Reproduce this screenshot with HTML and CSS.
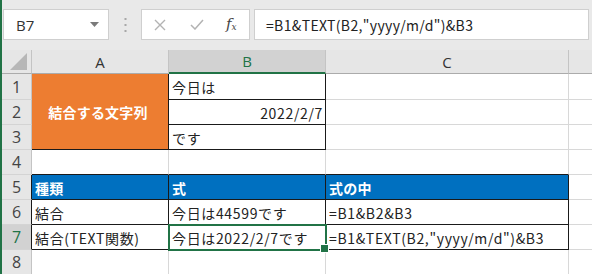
FILE: index.html
```html
<!DOCTYPE html>
<html lang="ja">
<head>
<meta charset="utf-8">
<link rel="stylesheet" href="styles.css">
</head>
<body>
<div class="app">
  <div class="toolbar">
    <div class="namebox">
      <span class="ref">B7</span>
      <svg class="caret" width="9" height="5" viewBox="0 0 9 5"><path d="M0 0h9L4.5 5z" fill="#7a7a7a"/></svg>
    </div>
    <div class="grip">
      <svg width="3" height="14" viewBox="0 0 3 14"><rect x="0.5" y="0" width="2" height="2" fill="#a8a8a8"/><rect x="0.5" y="6" width="2" height="2" fill="#a8a8a8"/><rect x="0.5" y="12" width="2" height="2" fill="#a8a8a8"/></svg>
    </div>
    <div class="fxbox">
      <svg class="ico-x" width="12" height="12" viewBox="0 0 12 12"><path d="M1 1L11 11M11 1L1 11" stroke="#b3b3b3" stroke-width="1.4" fill="none"/></svg>
      <svg class="ico-ok" width="14" height="11" viewBox="0 0 14 11"><path d="M1 6L5 10L13 1" stroke="#b3b3b3" stroke-width="1.5" fill="none"/></svg>
      <span class="fx"><i>f</i><sub>x</sub></span>
    </div>
    <div class="formula">=B1&amp;TEXT(B2,"yyyy/m/d")&amp;B3</div>
  </div>

  <div class="sheet">
    <div class="corner"><svg width="17" height="17" viewBox="0 0 17 17"><path d="M17 0V17H0z" fill="#b7b7b7"/></svg></div>
    <div class="ch">A</div>
    <div class="ch ch-sel">B</div>
    <div class="ch">C</div>
    <div class="ch ch-last"></div>

    <div class="rh">1</div>
    <div class="c merged bb br">結合する文字列</div>
    <div class="c bb br">今日は</div>
    <div class="c"></div>
    <div class="c last"></div>

    <div class="rh">2</div>
    <div class="c bb br right">2022/2/7</div>
    <div class="c"></div>
    <div class="c last"></div>

    <div class="rh">3</div>
    <div class="c bb br">です</div>
    <div class="c"></div>
    <div class="c last"></div>

    <div class="rh">4</div>
    <div class="c bb"></div>
    <div class="c bb"></div>
    <div class="c bb"></div>
    <div class="c last"></div>

    <div class="rh brb">5</div>
    <div class="c head bb br">種類</div>
    <div class="c head bb br">式</div>
    <div class="c head bb br">式の中</div>
    <div class="c last"></div>

    <div class="rh brb">6</div>
    <div class="c bb br">結合</div>
    <div class="c bb br">今日は44599です</div>
    <div class="c bb br">=B1&amp;B2&amp;B3</div>
    <div class="c last"></div>

    <div class="rh brb rh-sel">7</div>
    <div class="c bb br">結合(TEXT関数)</div>
    <div class="c bb br sel">今日は2022/2/7です</div>
    <div class="c bb br">=B1&amp;TEXT(B2,"yyyy/m/d")&amp;B3</div>
    <div class="c last"></div>

    <div class="rh">8</div>
    <div class="c"></div>
    <div class="c"></div>
    <div class="c"></div>
    <div class="c last"></div>
  </div>
</div>
</body>
</html>
```

FILE: styles.css
```css
* { box-sizing: border-box; }
html, body { margin: 0; padding: 0; }
body {
  width: 592px;
  height: 274px;
  overflow: hidden;
  background: #ffffff;
  font-family: "Noto Sans CJK JP", "Noto Sans", sans-serif;
}
.app {
  border-left: 2px solid #217346;
  height: 274px;
  overflow: hidden;
}
.toolbar {
  height: 50px;
  background: #e9e9e9;
  display: flex;
  align-items: flex-start;
  padding-top: 9px;
  padding-left: 1px;
}
.namebox {
  width: 106px;
  height: 31px;
  background: #fff;
  border: 1px solid #cfcfcf;
  display: flex;
  align-items: center;
  justify-content: space-between;
  padding: 0 9px 0 12px;
}
.ref {
  font-family: "Open Sans", "Noto Sans", sans-serif;
  font-size: 15px;
  color: #333;
}
.grip {
  width: 32px;
  height: 31px;
  display: flex;
  align-items: center;
  justify-content: center;
}
.fxbox {
  width: 109px;
  height: 31px;
  background: #fff;
  border: 1px solid #cfcfcf;
  display: flex;
  align-items: center;
  padding-left: 12px;
}
.ico-x { margin-right: 24px; }
.ico-ok { margin-right: 22px; }
.fx {
  font-family: "DejaVu Serif", "Liberation Serif", serif;
  font-size: 15px;
  color: #444;
  line-height: 1;
}
.fx i { font-style: italic; }
.fx sub { font-size: 9px; font-style: italic; vertical-align: -1px; }
.formula {
  margin-left: 4px;
  width: 335px;
  height: 31px;
  background: #fff;
  border: 1px solid #cfcfcf;
  display: flex;
  align-items: center;
  padding-left: 11px;
  font-size: 14px;
  letter-spacing: 0.35px;
  color: #222;
  white-space: nowrap;
}
.sheet {
  display: grid;
  grid-template-columns: 30px 137px 157px 243px 1fr;
  grid-template-rows: 24px 26px repeat(7, 25px);
}
.corner {
  background: #e6e6e6;
  border-right: 1px solid #c4c4c4;
  border-bottom: 1px solid #ababab;
  display: flex;
  align-items: flex-end;
  justify-content: flex-end;
  padding: 0 4px 3px 0;
}
.ch {
  background: #e6e6e6;
  border-right: 1px solid #c4c4c4;
  border-bottom: 1px solid #ababab;
  display: flex;
  align-items: center;
  justify-content: center;
  font-family: "Open Sans", "Noto Sans", sans-serif;
  font-size: 15px;
  color: #333;
}
.ch-sel {
  background: #d2d2d2;
  color: #217346;
  border-bottom: 2px solid #217346;
}
.ch-last { border-right: none; }
.rh {
  background: #e6e6e6;
  border-right: 1px solid #c4c4c4;
  border-bottom: 1px solid #d4d4d4;
  display: flex;
  align-items: center;
  justify-content: center;
  font-family: "Open Sans", "Noto Sans", sans-serif;
  font-size: 16px;
  color: #444;
}
.rh.brb { border-right-color: #1a1a1a; }
.rh-sel {
  background: #d2d2d2;
  color: #217346;
}
.c {
  border-right: 1px solid #d8d8d8;
  border-bottom: 1px solid #d8d8d8;
  display: flex;
  align-items: center;
  padding: 1px 2px 0 3px;
  font-size: 14px;
  letter-spacing: 0.65px;
  color: #222;
  white-space: nowrap;
}
.c.last { border-right: none; }
.c.bb { border-bottom-color: #1a1a1a; }
.c.br { border-right-color: #1a1a1a; }
.c.right { justify-content: flex-end; padding-right: 2px; }
.merged {
  grid-row: span 3;
  background: #ed7d31;
  color: #fff;
  font-weight: bold;
  letter-spacing: 0.2px;
  justify-content: center;
  padding: 0 4px 0 0;
}
.head {
  background: #0070c0;
  color: #fff;
  font-weight: bold;
  letter-spacing: 0.2px;
}
.sel {
  position: relative;
  outline: 2px solid #217346;
  outline-offset: -1px;
}
.sel::after {
  content: "";
  position: absolute;
  right: -4px;
  bottom: -4px;
  width: 7px;
  height: 7px;
  background: #217346;
  border: 1px solid #fff;
}
```
